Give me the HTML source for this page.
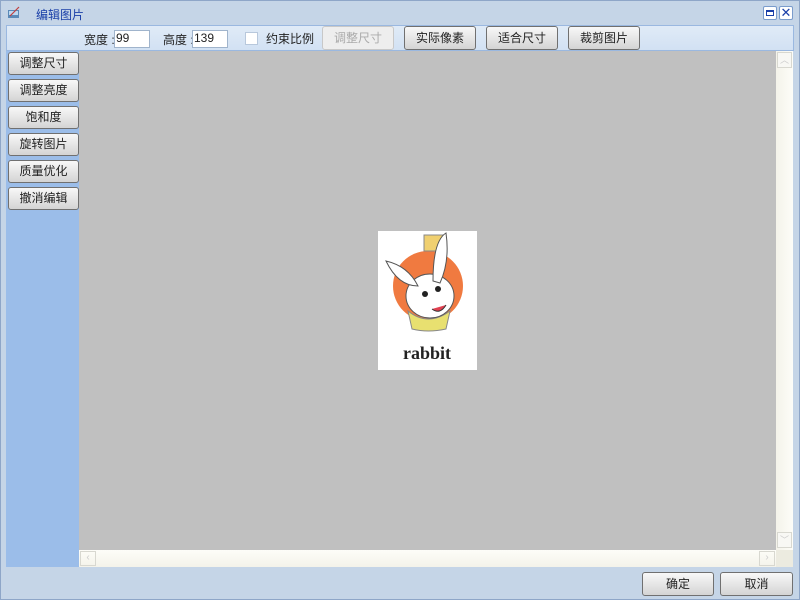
<!DOCTYPE html>
<html><head><meta charset="utf-8"><style>
*{margin:0;padding:0;box-sizing:border-box}
body{width:800px;height:600px;background:#c5d5e7;font-family:"Liberation Sans","Noto Sans CJK SC",sans-serif;font-size:12px;position:relative;overflow:hidden;color:#222}
.abs{position:absolute}
.btn{position:absolute;border:1px solid #707070;border-radius:3px;background:linear-gradient(#f8f8f8,#e6e6e6 50%,#d4d4d4);text-align:center;line-height:22px;font-size:12px;color:#222}
.lbtn{left:8px;width:71px;height:23px;line-height:21px}
</style></head><body>
<div class="abs" style="left:0;top:0;width:800px;height:600px;border:1px solid #8ea6c8"></div>
<svg class="abs" style="left:7px;top:6px" width="14" height="14"><rect x="1" y="4" width="11" height="8" fill="#5a8ab8"/><rect x="2" y="5" width="9" height="4" fill="#bcd8f0"/><path d="M3 10 L12 1" stroke="#c04040" stroke-width="1.2"/></svg>
<div class="abs" style="left:36px;top:6px;color:#1a3fa8;font-size:12px">编辑图片</div>
<div class="abs" style="left:763px;top:6px;width:14px;height:14px;border:1px solid #7a9ccc;background:#fff;border-radius:2px"><div style="margin:3px 2px;width:8px;height:6px;border:1px solid #1a3fa8;border-top-width:2px"></div></div>
<div class="abs" style="left:779px;top:6px;width:14px;height:14px;border:1px solid #7a9ccc;background:#fff;border-radius:2px;color:#1a3fa8;font-size:13px;line-height:12px;text-align:center">✕</div>
<div class="abs" style="left:6px;top:25px;width:788px;height:26px;background:linear-gradient(#e0ebf7,#d2e1f3);border:1px solid #9ab8e0"></div>
<div class="abs" style="left:84px;top:31px">宽度 :</div>
<div class="abs" style="left:114px;top:30px;width:36px;height:18px;background:#fff;border:1px solid #a0b4cc;font-size:12px;line-height:14px;padding-left:1px">99</div>
<div class="abs" style="left:163px;top:31px">高度 :</div>
<div class="abs" style="left:192px;top:30px;width:36px;height:18px;background:#fff;border:1px solid #a0b4cc;line-height:14px;padding-left:1px">139</div>
<div class="abs" style="left:245px;top:32px;width:13px;height:13px;background:#fff;border:1px solid #b8c8dc"></div>
<div class="abs" style="left:266px;top:30px">约束比例</div>
<div class="btn" style="left:322px;top:26px;width:72px;height:24px;color:#aaa;border-color:#c8c8c8;background:#eee">调整尺寸</div>
<div class="btn" style="left:404px;top:26px;width:72px;height:24px">实际像素</div>
<div class="btn" style="left:486px;top:26px;width:72px;height:24px">适合尺寸</div>
<div class="btn" style="left:568px;top:26px;width:72px;height:24px">裁剪图片</div>
<div class="abs" style="left:6px;top:51px;width:73px;height:516px;background:#9bbde9"></div>
<div class="btn lbtn" style="top:52px">调整尺寸</div>
<div class="btn lbtn" style="top:79px">调整亮度</div>
<div class="btn lbtn" style="top:106px">饱和度</div>
<div class="btn lbtn" style="top:133px">旋转图片</div>
<div class="btn lbtn" style="top:160px">质量优化</div>
<div class="btn lbtn" style="top:187px">撤消编辑</div>
<div class="abs" style="left:79px;top:51px;width:697px;height:499px;background:#c0c0c0"></div>
<div class="abs" style="left:776px;top:51px;width:17px;height:499px;background:linear-gradient(90deg,#f4f3ea,#fdfdf8)"></div>
<div class="abs" style="left:777px;top:52px;width:15px;height:16px;border:1px solid #d8d8d0;background:#f8f8f4;color:#ccc;font-size:9px;text-align:center">︿</div>
<div class="abs" style="left:777px;top:532px;width:15px;height:16px;border:1px solid #d8d8d0;background:#f8f8f4;color:#ccc;font-size:9px;text-align:center">﹀</div>
<div class="abs" style="left:79px;top:550px;width:697px;height:17px;background:linear-gradient(#fdfdf8,#f4f3ea)"></div>
<div class="abs" style="left:776px;top:550px;width:17px;height:17px;background:#ecebe0"></div>
<div class="abs" style="left:80px;top:551px;width:16px;height:15px;border:1px solid #d8d8d0;color:#ccc;font-size:10px;text-align:center">‹</div>
<div class="abs" style="left:759px;top:551px;width:16px;height:15px;border:1px solid #d8d8d0;color:#ccc;font-size:10px;text-align:center">›</div>
<div class="abs" style="left:378px;top:231px;width:99px;height:139px;background:#fff"></div>
<svg class="abs" style="left:378px;top:231px" width="99" height="139">
<circle cx="50" cy="55" r="35" fill="#f07a40"/>
<rect x="46" y="4" width="20" height="16" fill="#f0d070" stroke="#888"/>
<path d="M30 80 Q50 96 72 80 L68 98 Q50 102 34 98Z" fill="#e8e070" stroke="#888"/>
<ellipse cx="52" cy="65" rx="24" ry="22" fill="#fff" stroke="#555"/>
<path d="M8 30 Q30 35 40 55 Q20 55 8 30Z" fill="#fff" stroke="#555"/>
<path d="M55 50 Q55 10 68 2 Q72 30 62 52Z" fill="#fff" stroke="#555"/>
<circle cx="47" cy="63" r="3" fill="#222"/><circle cx="60" cy="58" r="3" fill="#222"/>
<path d="M54 78 Q62 84 68 74" fill="#e04050" stroke="#333"/>
<text x="49" y="128" text-anchor="middle" font-family="Liberation Serif,serif" font-weight="bold" font-size="18" fill="#222">rabbit</text>
</svg>
<div class="btn" style="left:642px;top:572px;width:72px;height:24px">确定</div>
<div class="btn" style="left:720px;top:572px;width:73px;height:24px">取消</div>
</body></html>
